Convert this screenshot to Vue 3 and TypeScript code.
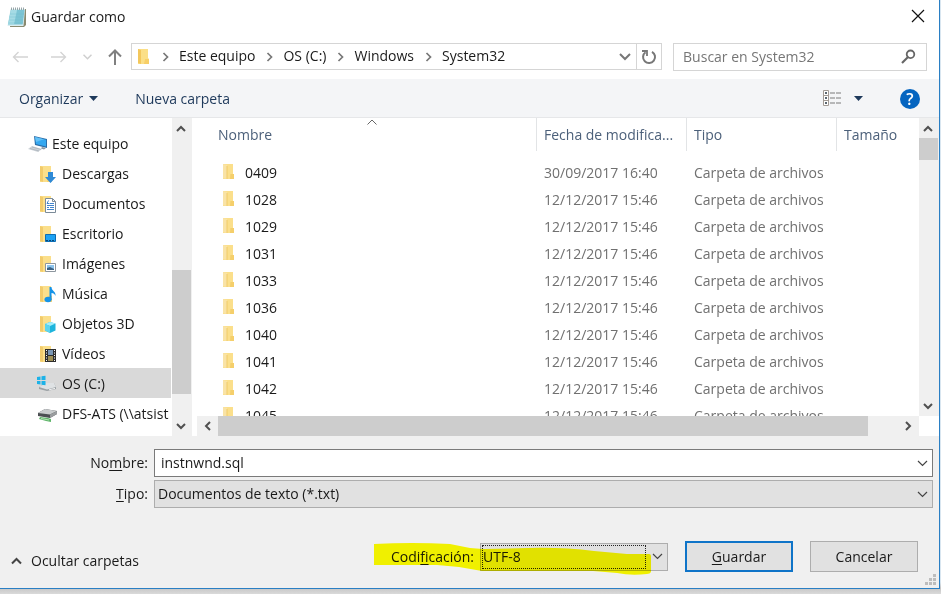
<script setup lang="ts">
import { ref } from 'vue'

type TreeIcon =
  | 'pc' | 'downloads' | 'documents' | 'desktop' | 'pictures'
  | 'music' | 'objects' | 'videos' | 'drive' | 'netdrive'

interface TreeNode {
  label: string
  icon: TreeIcon
  root?: boolean
}

interface FileRow {
  name: string
  date: string
  type: string
}

const crumbs: string[] = ['Este equipo', 'OS (C:)', 'Windows', 'System32']

const tree: TreeNode[] = [
  { label: 'Este equipo', icon: 'pc', root: true },
  { label: 'Descargas', icon: 'downloads' },
  { label: 'Documentos', icon: 'documents' },
  { label: 'Escritorio', icon: 'desktop' },
  { label: 'Imágenes', icon: 'pictures' },
  { label: 'Música', icon: 'music' },
  { label: 'Objetos 3D', icon: 'objects' },
  { label: 'Vídeos', icon: 'videos' },
  { label: 'OS (C:)', icon: 'drive' },
  { label: 'DFS-ATS (\\\\atsist', icon: 'netdrive' },
]

const names = ['0409', '1028', '1029', '1031', '1033', '1036', '1040', '1041', '1042', '1045']
const files: FileRow[] = names.map((name, i) => ({
  name,
  date: i === 0 ? '30/09/2017 16:40' : '12/12/2017 15:46',
  type: 'Carpeta de archivos',
}))

const selected = ref('OS (C:)')
const search = ref('')
const fileName = ref('instnwnd.sql')
const fileType = ref('Documentos de texto (*.txt)')
const encoding = ref('UTF-8')

const isFolder = (icon: TreeIcon) => !['pc', 'drive', 'netdrive'].includes(icon)
</script>

<template>
  <div class="screen">
    <main class="dialog">
      <header class="titlebar">
        <svg class="app-icon" width="20" height="22" viewBox="0 0 20 22" aria-hidden="true">
          <path d="M4 3h15v16l-2 2H3z" fill="#8a8a70" />
          <path d="M3.500 3h14.500l-1.500 17H.500z" fill="#d9edf0" />
          <path d="M3.800 4h13.700l-1.800 14.500H1z" fill="#7cc4d4" />
          <path d="M4 4h6L7 18.500H1z" fill="#a5dbe5" />
          <path d="M3 8h14M2.600 11h14M2.200 14h14M1.800 17h14" stroke="#6fbaca" stroke-width=".4" />
          <path d="M4.500 1.500v2.500M6.500 1.500v2.500M8.500 1.500v2.500M10.500 1.500v2.500M12.500 1.500v2.500M14.500 1.500v2.500M16.500 1.500v2.500" stroke="#7f9094" stroke-width=".8" />
        </svg>
        <h1>Guardar como</h1>
        <button class="plain close" type="button" aria-label="Cerrar">
          <svg width="14" height="14" viewBox="0 0 14 14"><path d="M1 1l12 12M13 1L1 13" stroke="#111" stroke-width="1.200" /></svg>
        </button>
      </header>

      <nav class="navbar" aria-label="Navegación">
        <div class="history">
          <button class="plain" type="button" aria-label="Atrás">
            <svg width="16" height="12" viewBox="0 0 16 12"><path d="M16 6H1.500M6.500 1l-5 5 5 5" fill="none" stroke="#d4d4d4" stroke-width="1.400" /></svg>
          </button>
          <button class="plain" type="button" aria-label="Adelante">
            <svg width="16" height="12" viewBox="0 0 16 12"><path d="M0 6h14.500M9.500 1l5 5-5 5" fill="none" stroke="#d4d4d4" stroke-width="1.400" /></svg>
          </button>
          <button class="plain recent" type="button" aria-label="Recientes">
            <svg width="9" height="6" viewBox="0 0 9 6"><path d="M.500.800l4 4 4-4" fill="none" stroke="#cfcfcf" stroke-width="1.500" /></svg>
          </button>
          <button class="plain" type="button" aria-label="Subir">
            <svg width="14" height="16" viewBox="0 0 14 16"><path d="M7 16V1.500M1 7.500l6-6 6 6" fill="none" stroke="#808080" stroke-width="2" /></svg>
          </button>
        </div>
        <div class="address">
          <svg class="folder" width="13" height="17" viewBox="0 0 13 17" aria-hidden="true">
            <path d="M1 1h10v9l1 1v5H1z" fill="#fbdf87" /><path d="M1 1l3 1v14l-3-1z" fill="#f3c75c" /><path d="M8 11h4v5H7z" fill="#f7cf68" />
          </svg>
          <template v-for="c in crumbs" :key="c">
            <svg class="sep" width="28" height="10" viewBox="0 0 28 10" aria-hidden="true"><path d="M12.500 1l4 4-4 4" fill="none" stroke="#777" stroke-width="1.700" /></svg>
            <button class="plain crumb" type="button">{{ c }}</button>
          </template>
          <button class="plain drop" type="button" aria-label="Ubicaciones anteriores">
            <svg width="12" height="8" viewBox="0 0 12 8"><path d="M1 1l5 5 5-5" fill="none" stroke="#777" stroke-width="2" /></svg>
          </button>
          <button class="plain refresh" type="button" aria-label="Actualizar">
            <svg width="16" height="16" viewBox="0 0 16 16"><path d="M4.500 3.200a6 6 0 1 0 6.500-.400" fill="none" stroke="#777" stroke-width="2" /><path d="M1 2h5v5" fill="none" stroke="#777" stroke-width="1.800" /></svg>
          </button>
        </div>
        <label class="search">
          <input v-model="search" type="search" placeholder="Buscar en System32" aria-label="Buscar en System32" />
          <svg width="15" height="15" viewBox="0 0 15 15" aria-hidden="true"><circle cx="9.500" cy="5.300" r="3.800" fill="none" stroke="#666" stroke-width="1.800" /><path d="M7 8l-6 6" stroke="#666" stroke-width="2.200" /></svg>
        </label>
      </nav>

      <div class="toolbar">
        <button class="plain" type="button">
          Organizar
          <svg width="9" height="5" viewBox="0 0 9 5" aria-hidden="true"><path d="M0 0h9L4.500 5z" fill="#1e395b" /></svg>
        </button>
        <button class="plain" type="button">Nueva carpeta</button>
        <button class="plain view" type="button" aria-label="Cambiar la vista">
          <svg width="19" height="17" viewBox="0 0 19 17">
            <path d="M.500.500h5v15h-5zM.500 5.500h5M.500 10.500h5" fill="#fff" stroke="#a39b95" />
            <path d="M2 2h2v2H2zM2 7h2v2H2zM2 12h2v2H2z" fill="#5a6670" />
            <path d="M7 3h5M13 3h5M7 8h5M13 8h5M7 13h5M13 13h5" stroke="#7b7b7b" />
          </svg>
          <svg width="9" height="5" viewBox="0 0 9 5"><path d="M0 0h9L4.500 5z" fill="#1e395b" /></svg>
        </button>
        <button class="plain help" type="button" aria-label="Ayuda">?</button>
      </div>

      <div class="panes">
        <ul class="tree">
          <li v-for="n in tree" :key="n.label">
            <button class="plain node" :class="{ root: n.root, selected: selected === n.label }" type="button" @click="selected = n.label">
              <svg width="20" height="18" viewBox="0 0 20 18" aria-hidden="true">
                <template v-if="isFolder(n.icon)">
                  <path d="M3 1h11v9l1 1v6H3z" fill="#fbdf8b" /><path d="M3 1l3 1v15l-3-1z" fill="#f2cb6b" /><path d="M11 11h4v6h-5z" fill="#f7d272" />
                </template>
                <template v-if="n.icon === 'pc'">
                  <path d="M6 1l13 3v9L7 10z" fill="#2b6ea8" /><path d="M7 2l11 2.800v6.800L8 9z" fill="#35a8f0" /><path d="M7 2l9 2.300L8 7z" fill="#63c1f7" />
                  <path d="M4 11l10 3-4 3-10-3z" fill="#cdd3d8" /><path d="M2 13.500l9 2.500M4 12l9 2.500" stroke="#a5aeb6" stroke-width=".7" /><path d="M14 12l4 1-2 1.500-3-1z" fill="#8896a3" />
                </template>
                <path v-else-if="n.icon === 'downloads'" d="M11 7h5v5h3l-5.500 6L8 12h3z" fill="#2f8ad6" />
                <template v-else-if="n.icon === 'documents'">
                  <path d="M8.500 3.500h7l3 3v11h-10z" fill="#fff" stroke="#7b8b99" /><path d="M15.500 3.500v3h3" fill="none" stroke="#7b8b99" />
                  <path d="M13 8.500h4M10 10.500h7M10 12.500h2M13 12.500h4M10 14.500h7M11.500 5.500l-1.500 3h2.500" stroke="#2a76c6" fill="none" stroke-width=".9" />
                </template>
                <template v-else-if="n.icon === 'desktop'">
                  <path d="M8.500 9.500h10v7h-10z" fill="#1da2f4" stroke="#0d6db3" /><path d="M9 15.500h9" stroke="#0b4674" stroke-dasharray="2 1" />
                </template>
                <template v-else-if="n.icon === 'pictures'">
                  <path d="M8.500 8.500h10v8h-10z" fill="#fff" stroke="#8d969e" /><path d="M10 10h7v5h-7z" fill="#8cc4ed" /><path d="M10 13l3-1 4 2v1h-7z" fill="#3a6284" />
                </template>
                <template v-else-if="n.icon === 'music'">
                  <ellipse cx="11" cy="14.500" rx="3.500" ry="2.800" fill="#1593e8" /><path d="M12.500 2h2c0 4 4.500 4 4 9-.7-2-2-3-4-3v7h-2z" fill="#1593e8" />
                </template>
                <template v-else-if="n.icon === 'objects'">
                  <path d="M13 7l5.500 1.500v7L13 18l-5-2.500V9z" fill="#1eb4dc" /><path d="M13 7l5.500 1.500L13 11 8 9z" fill="#a4edfa" /><path d="M13 11v7l-5-2.500V9z" fill="#5cd4ee" />
                </template>
                <template v-else-if="n.icon === 'videos'">
                  <path d="M8 4h11v13H8z" fill="#2d2d2d" /><path d="M11 5h5v5h-5z" fill="#7a97b5" /><path d="M11 11h5v5h-5z" fill="#9e8f55" />
                  <path d="M9.500 5v12M17.500 5v12" stroke="#fff" stroke-dasharray="1 1.500" />
                </template>
                <template v-else-if="n.icon === 'drive'">
                  <path d="M2 12l7-4h8l2 4v2l-9 2-8-2z" fill="#9aa0a4" /><path d="M2 12l7-4h8l2 4-9 2.500z" fill="#dfe2e4" /><path d="M12 14.800l6-1.400" stroke="#f2f2f2" />
                  <path d="M0 2l3.500-.5V5H0zM4.500 1.300L8.500 .7V5h-4zM0 6h3.500v3.500L0 9zM4.500 6h4v4.300l-4-.6z" fill="#1cb2e8" />
                </template>
                <template v-else-if="n.icon === 'netdrive'">
                  <path d="M1 8l7-4 12 2v3l-7 4-12-2z" fill="#4b4f52" /><path d="M1 8l7-4 12 2-7 3.500z" fill="#c9cccd" /><path d="M13 9.500L20 6v3l-7 4z" fill="#9a9d9f" />
                  <path d="M3 12l8 1 3 1v3l-5-1-7-2z" fill="#5fb56a" /><path d="M4 13.500l8 1.500" stroke="#b3e2b4" />
                </template>
              </svg>
              <span>{{ n.label }}</span>
            </button>
          </li>
        </ul>

        <div class="vbar tree-bar">
          <button class="plain" type="button" aria-label="Desplazar árbol arriba"><svg width="10" height="7" viewBox="0 0 10 7"><path d="M1 6l4-4 4 4" fill="none" stroke="#505050" stroke-width="2" /></svg></button>
          <div class="track"><i class="before" /><i class="thumb" /><i class="after" /></div>
          <button class="plain" type="button" aria-label="Desplazar árbol abajo"><svg width="10" height="7" viewBox="0 0 10 7"><path d="M1 1l4 4 4-4" fill="none" stroke="#505050" stroke-width="2" /></svg></button>
        </div>

        <section class="list">
          <div class="list-body">
            <div class="rows">
              <table>
                <colgroup><col /><col class="c-date" /><col class="c-type" /><col class="c-size" /></colgroup>
                <thead>
                  <tr>
                    <th scope="col" aria-sort="ascending">
                      Nombre
                      <svg class="sort" width="10" height="6" viewBox="0 0 10 6" aria-hidden="true"><path d="M.500 5.500L5 1l4.500 4.500" fill="none" stroke="#666" /></svg>
                    </th>
                    <th scope="col">Fecha de modifica...</th>
                    <th scope="col">Tipo</th>
                    <th scope="col">Tamaño</th>
                  </tr>
                </thead>
                <tbody>
                  <tr v-for="f in files" :key="f.name">
                    <td>
                      <span class="file">
                        <svg width="13" height="19" viewBox="0 0 13 19" aria-hidden="true">
                          <path d="M1 1h10v10l1 1v4H1z" fill="#fbdf8b" /><path d="M1 1l4 1v14l-4-1z" fill="#f9e3a6" /><path d="M5 3v13M9 11v5" stroke="#efc560" stroke-width=".8" /><path d="M9 11h3v5H8z" fill="#f5cf6b" />
                        </svg>
                        {{ f.name }}
                      </span>
                    </td>
                    <td>{{ f.date }}</td>
                    <td>{{ f.type }}</td>
                    <td></td>
                  </tr>
                </tbody>
              </table>
            </div>
            <div class="vbar list-bar">
              <button class="plain" type="button" aria-label="Desplazar lista arriba"><svg width="10" height="7" viewBox="0 0 10 7"><path d="M1 6l4-4 4 4" fill="none" stroke="#505050" stroke-width="2" /></svg></button>
              <div class="track"><i class="thumb" /><i class="after" /></div>
              <button class="plain" type="button" aria-label="Desplazar lista abajo"><svg width="10" height="7" viewBox="0 0 10 7"><path d="M1 1l4 4 4-4" fill="none" stroke="#505050" stroke-width="2" /></svg></button>
            </div>
          </div>
          <div class="hbar">
            <button class="plain" type="button" aria-label="Desplazar a la izquierda"><svg width="7" height="10" viewBox="0 0 7 10"><path d="M6 1L2 5l4 4" fill="none" stroke="#505050" stroke-width="2" /></svg></button>
            <div class="track"><i class="thumb" /><i class="after" /></div>
            <button class="plain" type="button" aria-label="Desplazar a la derecha"><svg width="7" height="10" viewBox="0 0 7 10"><path d="M1 1l4 4-4 4" fill="none" stroke="#505050" stroke-width="2" /></svg></button>
          </div>
        </section>
      </div>

      <form class="footer" @submit.prevent>
        <div class="fields">
          <label for="file-name">No<u>m</u>bre:</label>
          <div class="combo editable">
            <input id="file-name" v-model="fileName" type="text" />
            <svg width="11" height="7" viewBox="0 0 11 7" aria-hidden="true"><path d="M1 1l4.500 4.500L10 1" fill="none" stroke="#444" stroke-width="1.200" /></svg>
          </div>
          <label for="file-type"><u>T</u>ipo:</label>
          <div class="combo">
            <select id="file-type" v-model="fileType"><option>Documentos de texto (*.txt)</option><option>Todos los archivos</option></select>
            <svg width="11" height="7" viewBox="0 0 11 7" aria-hidden="true"><path d="M1 1l4.500 4.500L10 1" fill="none" stroke="#444" stroke-width="1.200" /></svg>
          </div>
        </div>
        <div class="actions">
          <button class="plain hide" type="button">
            <svg width="11" height="8" viewBox="0 0 11 8" aria-hidden="true"><path d="M1 6.500L5.500 2 10 6.500" fill="none" stroke="#444" stroke-width="2" /></svg>
            Ocultar carpetas
          </button>
          <div class="encoding">
            <label for="encoding">Codi<u>f</u>icación:</label>
            <div class="combo focused">
              <select id="encoding" v-model="encoding"><option>UTF-8</option><option>ANSI</option><option>Unicode</option></select>
              <svg width="11" height="7" viewBox="0 0 11 7" aria-hidden="true"><path d="M1 1l4.500 4.500L10 1" fill="none" stroke="#444" stroke-width="1.200" /></svg>
            </div>
            <svg class="marker" width="278" height="32" viewBox="0 0 278 32" aria-hidden="true">
              <path d="M0 1q38-2 76 0l20 4 13 1 45-1q34-1 66 3l33 3h22q2 0 2 2v16q-1 2-4 2-16 2-30-1l-24-2H108L85 24l-22-2H0z" fill="#ff0" />
            </svg>
          </div>
          <button class="push primary" type="submit"><span><u>G</u>uardar</span></button>
          <button class="push" type="button">Cancelar</button>
        </div>
        <svg class="grip" width="11" height="11" viewBox="0 0 11 11" aria-hidden="true">
          <path d="M8 0h3v3H8zM4 4h3v3H4zM8 4h3v3H8zM0 8h3v3H0zM4 8h3v3H4zM8 8h3v3H8z" fill="#bdbdbd" />
        </svg>
      </form>
    </main>
  </div>
</template>

<style>
body {
  margin: 0;
}
</style>

<style scoped>
* {
  box-sizing: border-box;
}
svg {
  display: block;
  flex: none;
}
.screen {
  height: 100vh;
  min-height: 480px;
  display: flex;
  padding: 0 1px 5px 0;
  background: linear-gradient(#d9e6f0 0, #d9e6f0 98%, #c6c6c6 99%, #dadada 100%);
  font: 14px/20px 'Open Sans', 'Noto Sans', sans-serif;
  color: #1a1a1a;
}
.dialog {
  flex: 1;
  min-width: 0;
  display: flex;
  flex-direction: column;
  background: #fff;
  border: solid #2a7fc4;
  border-width: 0 1px 1px 0;
}
.plain {
  display: flex;
  align-items: center;
  justify-content: center;
  padding: 0;
  border: 0;
  background: none;
  color: inherit;
  font: inherit;
}
.titlebar {
  display: flex;
  align-items: center;
  gap: 4px;
  height: 34px;
  padding: 0 14px 0 7px;
}
h1 {
  margin: 0;
  font: inherit;
}
.close {
  margin-left: auto;
  padding-bottom: 2px;
}
.navbar {
  display: flex;
  align-items: center;
  height: 45px;
  padding: 0 12px 0 12px;
}
.history {
  display: flex;
  align-items: center;
  gap: 16px;
  width: 119px;
}
.history button:first-child {
  margin-right: 7px;
}
.address {
  flex: 9;
  min-width: 0;
  display: flex;
  align-items: center;
  height: 27px;
  border: 1px solid #d5d5d5;
  padding-left: 5px;
}
.address .folder {
  margin-right: 1px;
}
.crumb {
  padding-bottom: 2px;
  white-space: nowrap;
}
.drop {
  margin-left: auto;
  width: 22px;
}
.refresh {
  align-self: stretch;
  width: 25px;
  border-left: 1px solid #d5d5d5;
}
.search {
  flex: 4;
  min-width: 0;
  display: flex;
  align-items: center;
  height: 28px;
  margin-left: 11px;
  padding: 0 10px 0 9px;
  border: 1px solid #d5d5d5;
}
input,
select {
  flex: 1;
  min-width: 0;
  width: 100%;
  height: 100%;
  margin: 0;
  border: 0;
  outline: 0;
  padding: 0;
  background: none;
  color: #1a1a1a;
  font: inherit;
  appearance: none;
}
.search input::placeholder {
  color: #767676;
  opacity: 1;
}
.toolbar {
  display: flex;
  align-items: center;
  height: 39px;
  padding: 1px 19px 0;
  background: #f4f5f7;
  border-bottom: 1px solid #e6e7e9;
  color: #1e395b;
  gap: 37px;
}
.toolbar button {
  gap: 6px;
}
.toolbar .view {
  margin-left: auto;
  gap: 12px;
}
.toolbar .help {
  width: 20px;
  height: 20px;
  border-radius: 50%;
  background: #0565c0;
  color: #fff;
  font-size: 16px;
  font-weight: 600;
}
.panes {
  flex: 1;
  min-height: 0;
  display: flex;
}
.tree {
  width: 171px;
  flex: none;
  margin: 0;
  padding: 10px 0 0;
  list-style: none;
  overflow: hidden;
}
.node {
  width: 100%;
  height: 30px;
  justify-content: flex-start;
  gap: 5px;
  padding: 2px 0 0 37px;
  white-space: nowrap;
}
.node.root {
  padding-left: 28px;
  gap: 4px;
}
.node.selected {
  background: #d9d9d9;
}
.vbar {
  flex: none;
  display: flex;
  flex-direction: column;
  width: 20px;
  background: #f0f0f0;
}
.vbar button {
  height: 20px;
  padding-right: 2px;
}
.tree-bar {
  margin-left: 1px;
}
.track {
  flex: 1;
  display: flex;
}
.vbar .track {
  flex-direction: column;
  padding-right: 1px;
}
.thumb {
  background: #cdcdcd;
}
.tree-bar .before {
  flex: 132;
}
.tree-bar .thumb {
  flex: 124;
}
.tree-bar .after {
  flex: 22;
}
.list-bar .thumb {
  flex: 22;
}
.list-bar .after {
  flex: 236;
}
.hbar .thumb {
  flex: 650;
}
.hbar .after {
  flex: 30;
}
.list {
  flex: 1;
  min-width: 0;
  display: flex;
  flex-direction: column;
}
.list-body {
  flex: 1;
  min-height: 0;
  display: flex;
}
.rows {
  flex: 1;
  min-width: 0;
  overflow: hidden;
}
.hbar {
  display: flex;
  height: 20px;
  margin: 0 20px 0 5px;
  background: #f0f0f0;
}
.hbar button {
  width: 21px;
}
table {
  width: 100%;
  table-layout: fixed;
  border-collapse: separate;
  border-spacing: 0;
}
.c-date,
.c-type {
  width: 150px;
}
.c-size {
  width: 83px;
}
th {
  position: relative;
  height: 33px;
  padding: 0 0 0 7px;
  border-left: 1px solid #e2e4e6;
  text-align: left;
  font-weight: 400;
  color: #4c607a;
  white-space: nowrap;
}
th:first-child {
  padding-left: 26px;
  border-left: 0;
}
.sort {
  position: absolute;
  top: 1px;
  left: 51%;
}
td {
  height: 27px;
  padding: 0 0 0 8px;
  color: #707070;
  white-space: nowrap;
}
td:first-child {
  padding-left: 30px;
  color: #1a1a1a;
}
tbody::before {
  content: '';
  display: block;
  height: 8px;
}
.file {
  display: flex;
  align-items: center;
  gap: 10px;
}
.footer {
  position: relative;
  padding: 13px 6px 16px 0;
  background: #f0f0f0;
}
.fields {
  display: grid;
  grid-template-columns: 148px 1fr;
  gap: 3px 6px;
  align-items: center;
}
.fields label {
  text-align: right;
}
u {
  text-underline-offset: 2px;
}
.combo {
  display: flex;
  align-items: center;
  height: 28px;
  padding: 0 4px 0 3px;
  border: 1px solid #adadad;
  background: #e1e1e1;
}
.combo.editable {
  padding-left: 6px;
  border-color: #7a7a7a;
  background: #fff;
}
.editable input {
  padding-bottom: 2px;
}
.actions {
  display: flex;
  align-items: center;
  gap: 17px;
  margin-top: 33px;
  padding: 0 15px 0 11px;
}
.hide {
  gap: 9px;
  margin-right: auto;
  align-self: flex-end;
  padding-bottom: 1px;
}
.encoding {
  position: relative;
  display: flex;
  align-items: center;
  gap: 6px;
}
.encoding .combo {
  width: 188px;
  padding-left: 2px;
}
.focused select {
  height: 22px;
  margin-right: 7px;
  outline: 1px dotted #222;
}
.marker {
  position: absolute;
  right: 16px;
  top: 0;
  mix-blend-mode: multiply;
  pointer-events: none;
}
.push {
  width: 108px;
  height: 31px;
  padding: 0;
  border: 1px solid #adadad;
  background: #e1e1e1;
  color: #1a1a1a;
  font: inherit;
}
.push.primary {
  border: 2px solid #0f74c8;
}
.grip {
  position: absolute;
  right: 3px;
  bottom: 3px;
}
</style>
